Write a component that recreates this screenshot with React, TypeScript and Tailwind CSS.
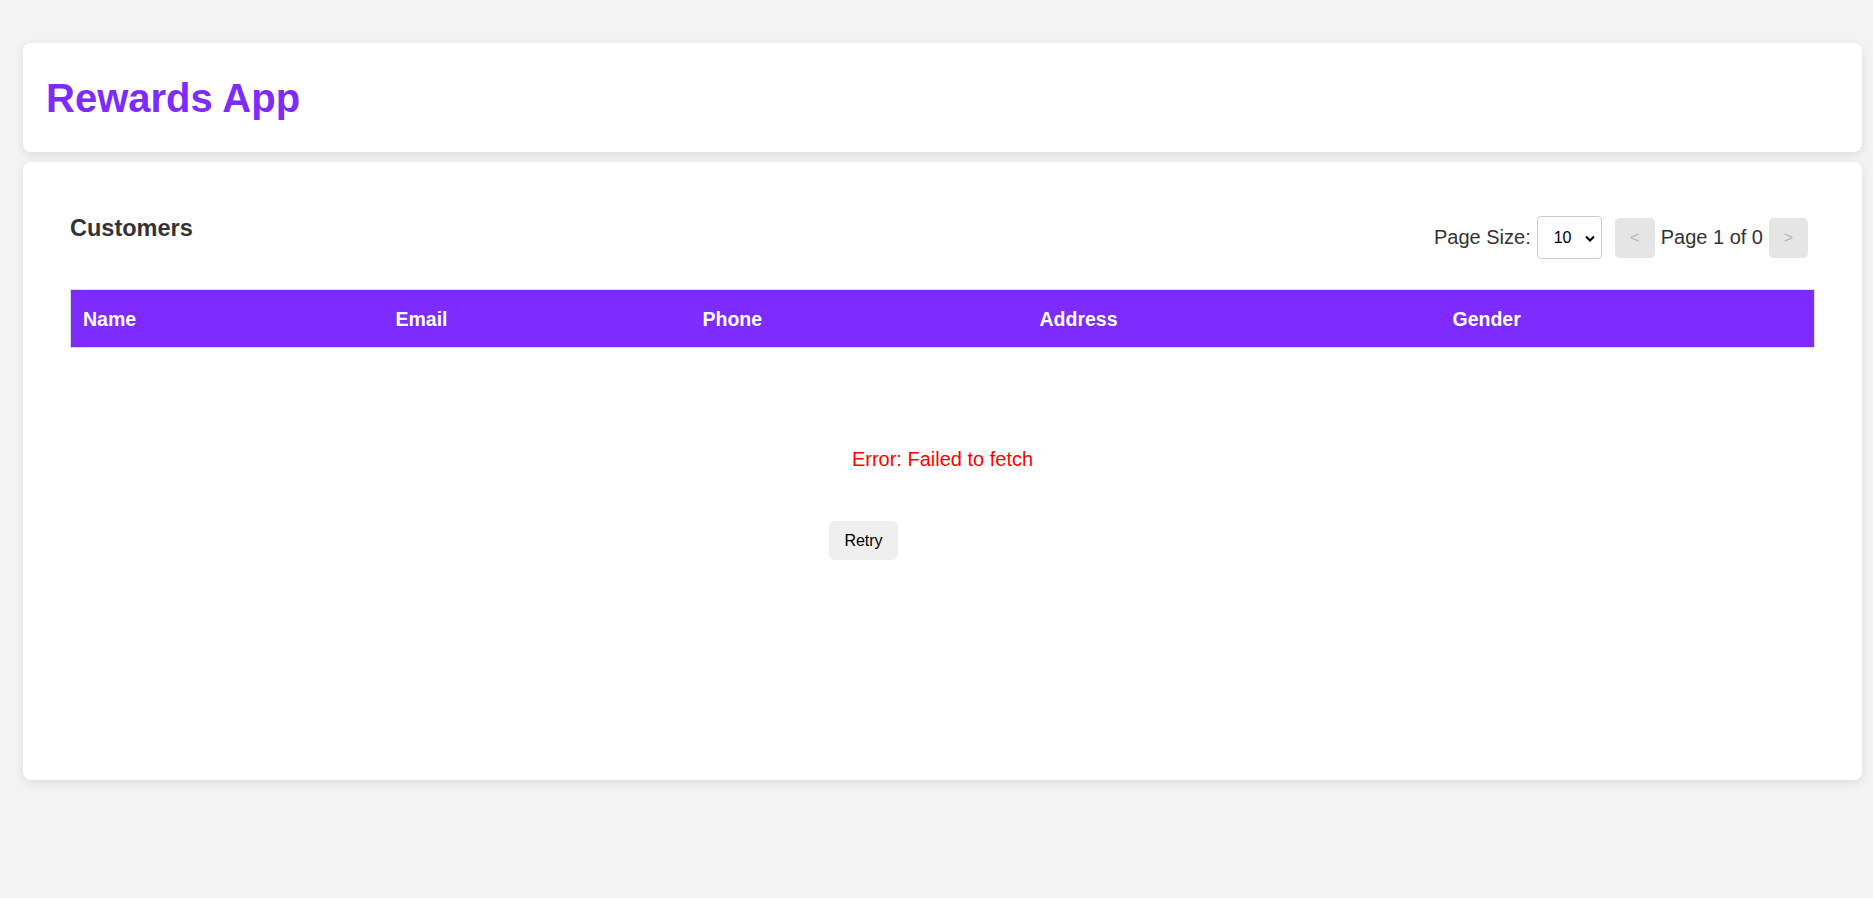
import React from "react";

export default function App() {
  const cols = [
    { label: "Name", w: "w-[313px]" },
    { label: "Email", w: "w-[307px]" },
    { label: "Phone", w: "w-[337px]" },
    { label: "Address", w: "w-[413px]" },
    { label: "Gender", w: "" },
  ];
  return (
    <div className="min-h-screen bg-[#f3f3f3] pt-[43px] pl-[23px] pr-[11px] pb-[40px] font-['Liberation_Sans',Arial,sans-serif]">
      <header className="flex h-[109px] items-center rounded-lg bg-white px-[23px] shadow-[0_3px_10px_rgba(0,0,0,0.09)]">
        <h1 className="text-[40px] font-bold leading-[46px] text-[#7d2bff]">Rewards App</h1>
      </header>

      <main className="mt-[10px] h-[618px] rounded-lg bg-white px-[47px] pt-[52px] shadow-[0_3px_10px_rgba(0,0,0,0.09)]">
        <div className="flex items-start justify-between">
          <h2 className="text-[23.5px] font-bold leading-[28px] text-[#333]">Customers</h2>
          <div className="mr-[7px] mt-[2px] flex items-center text-[20px] text-[#333]">
            <span className="-mt-[1px]">Page Size:</span>
            <div className="relative ml-[6px]">
              <select
                defaultValue="10"
                className="h-[43px] w-[65px] appearance-none rounded-[4px] border border-[#ccc] bg-white pl-[16px] text-[16px] text-black outline-none"
              >
                <option value="5">5</option>
                <option value="10">10</option>
                <option value="20">20</option>
              </select>
              <svg
                className="pointer-events-none absolute right-[7px] top-[19px]"
                width="10"
                height="7"
                viewBox="0 0 10 7"
              >
                <path d="M1 1.5 L5 5.5 L9 1.5" fill="none" stroke="#000" strokeWidth="2" />
              </svg>
            </div>
            <button
              disabled
              className="ml-[13px] flex h-[40px] w-[40px] items-center justify-center rounded-[5px] bg-[#e5e5e5] text-[16px] text-[#b5b5b5]"
            >
              &lt;
            </button>
            <span className="mx-[6px] -mt-[1px]">Page 1 of 0</span>
            <button
              disabled
              className="flex h-[40px] w-[39px] items-center justify-center rounded-[5px] bg-[#e5e5e5] text-[16px] text-[#b5b5b5]"
            >
              &gt;
            </button>
          </div>
        </div>

        <table className="mt-[30px] w-full table-fixed border-collapse border border-[#ddd]">
          <thead>
            <tr className="bg-[#7d2bff]">
              {cols.map((c) => (
                <th
                  key={c.label}
                  className={`${c.w} h-[58px] px-[12px] pt-[2px] text-left text-[19.5px] font-bold text-white`}
                >
                  {c.label}
                </th>
              ))}
            </tr>
          </thead>
        </table>

        <p className="mt-[100px] text-center text-[20px] leading-[23px] text-[#ff0000]">Error: Failed to fetch</p>
        <div className="mt-[50px] pl-[759px]">
          <button className="h-[39px] w-[69px] rounded-[6px] bg-[#efefef] text-[16px] text-black">Retry</button>
        </div>
      </main>
    </div>
  );
}
